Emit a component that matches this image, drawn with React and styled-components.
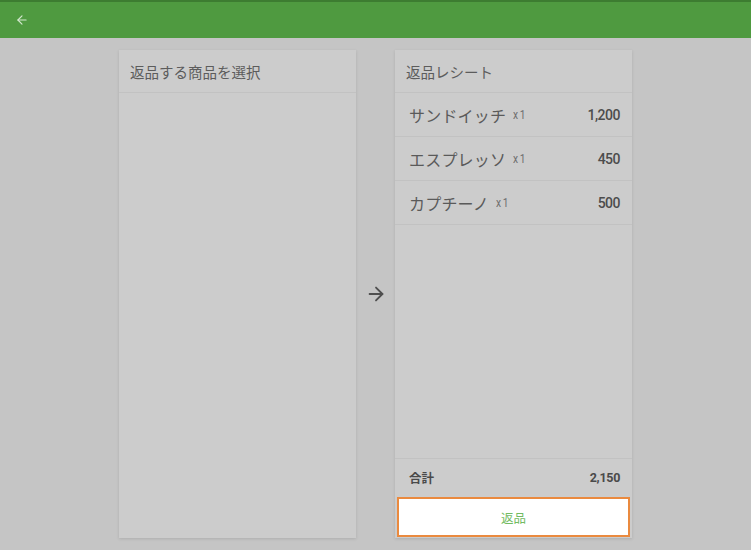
import React from 'react';
import styled, { createGlobalStyle } from 'styled-components';
import { ArrowLeft, ArrowRight } from 'lucide-react';

const GlobalStyle = createGlobalStyle`
  html, body {
    margin: 0;
    padding: 0;
    background: #c5c5c5;
    font-family: Roboto, "Noto Sans CJK JP", sans-serif;
  }
`;

const Page = styled.div`
  width: 751px;
  height: 550px;
  display: flex;
  flex-direction: column;
  background: #c5c5c5;
  overflow: hidden;
`;

const Header = styled.div`
  height: 36px;
  flex: none;
  display: flex;
  align-items: center;
  padding-left: 15px;
  background: #4f9a40;
  border-top: 2px solid #3d7c31;
  color: #d4e8cf;
`;

const Body = styled.div`
  flex: 1;
  display: flex;
  justify-content: center;
  padding: 12px 0;
`;

const Card = styled.div`
  width: 237px;
  display: flex;
  flex-direction: column;
  background: #cccccc;
  box-shadow: 0 1px 3px rgba(0, 0, 0, 0.12);
`;

const CardTitle = styled.div`
  height: 42px;
  flex: none;
  display: flex;
  align-items: center;
  padding: 0 11px;
  font-size: 14.5px;
  color: #5c5c5c;
  border-bottom: 1px solid #c2c2c2;
`;

const ArrowCol = styled.div`
  width: 39px;
  display: flex;
  align-items: center;
  justify-content: center;
  color: #4f4f4f;
`;

const Row = styled.div`
  height: 43px;
  flex: none;
  display: flex;
  align-items: center;
  padding: 0 12px 0 14px;
  border-bottom: 1px solid #c2c2c2;
  color: #5a5a5a;
`;

const Name = styled.span`
  font-size: 16px;
  letter-spacing: 0.2px;
`;

const Qty = styled.span`
  font-size: 12px;
  margin-left: 7px;
  color: #6e6e6e;
  letter-spacing: 2px;
  transform: scaleX(0.85);
  transform-origin: left center;
`;

const Price = styled.span`
  margin-left: auto;
  font-size: 14px;
  font-weight: 500;
  color: #4c4c4c;
  letter-spacing: -0.5px;
`;

const Filler = styled.div`
  flex: 1;
  border-bottom: 1px solid #c2c2c2;
`;

const TotalRow = styled.div`
  height: 36px;
  flex: none;
  display: flex;
  align-items: center;
  padding: 0 12px 0 14px;
  font-size: 12.5px;
  font-weight: 700;
  color: #4a4a4a;
`;

const TotalValue = styled.span`
  margin-left: auto;
  letter-spacing: -0.3px;
`;

const ReturnButton = styled.button`
  margin: 2px 2px 1px;
  height: 40px;
  flex: none;
  background: #ffffff;
  border: 2px solid #ea8a3f;
  font-family: inherit;
  font-size: 12.5px;
  color: #72bb62;
  cursor: pointer;
`;

const items = [
  { name: 'サンドイッチ', qty: 1, price: '1,200' },
  { name: 'エスプレッソ', qty: 1, price: '450' },
  { name: 'カプチーノ', qty: 1, price: '500' },
];

export default function App() {
  return (
    <>
      <GlobalStyle />
      <Page>
        <Header>
          <ArrowLeft size={14} strokeWidth={2} />
        </Header>
        <Body>
          <Card>
            <CardTitle>返品する商品を選択</CardTitle>
          </Card>
          <ArrowCol>
            <ArrowRight size={22} strokeWidth={2} />
          </ArrowCol>
          <Card>
            <CardTitle>返品レシート</CardTitle>
            {items.map((it) => (
              <Row key={it.name}>
                <Name>{it.name}</Name>
                <Qty>x{it.qty}</Qty>
                <Price>{it.price}</Price>
              </Row>
            ))}
            <Filler />
            <TotalRow>
              <span>合計</span>
              <TotalValue>2,150</TotalValue>
            </TotalRow>
            <ReturnButton>返品</ReturnButton>
          </Card>
        </Body>
      </Page>
    </>
  );
}
